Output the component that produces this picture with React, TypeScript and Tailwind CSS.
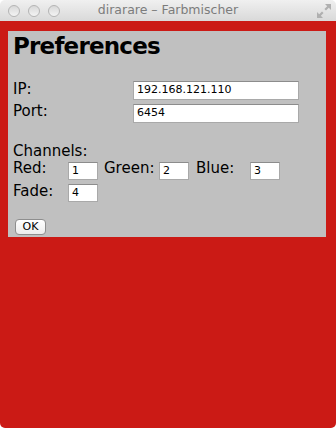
import React from "react";

const labelFont = { fontFamily: '"DejaVu Sans", "Liberation Sans", sans-serif' };

function Field({ value, className }: { value: string; className: string }) {
  return (
    <div
      className={`bg-white border border-[#a9a9a9] border-t-[#8c8c8c] pl-[3px] text-[11px] leading-[16px] text-black ${className}`}
    >
      {value}
    </div>
  );
}

function TrafficLight() {
  return (
    <div className="w-[12px] h-[12px] rounded-full border border-[#b4b4b4] bg-gradient-to-b from-[#d8d8d8] to-[#f4f4f4]" />
  );
}

export default function App() {
  return (
    <div
      className="w-[336px] h-[428px] flex flex-col rounded-[5px] overflow-hidden bg-white"
      style={labelFont}
    >
      {/* title bar */}
      <div className="relative h-[21px] shrink-0 flex items-center bg-gradient-to-b from-[#f0f0f0] to-[#d9d9d9]">
        <div className="flex gap-[8px] pl-[8px]">
          <TrafficLight />
          <TrafficLight />
          <TrafficLight />
        </div>
        <div className="absolute inset-0 flex items-center justify-center text-[12.5px] text-[#7c7c7c]">
          dirarare – Farbmischer
        </div>
        <svg
          className="absolute right-[5px] top-[4px]"
          width="14"
          height="14"
          viewBox="0 0 14 14"
          fill="#b0b0b0"
        >
          <path d="M8 0h6v6l-2.2-2.2-2.8 2.8-1.6-1.6 2.8-2.8z" />
          <path d="M6 14H0V8l2.2 2.2 2.8-2.8 1.6 1.6-2.8 2.8z" />
        </svg>
      </div>

      {/* content */}
      <div className="flex-1 bg-[#cb1a15] pt-[10px] pl-[8px]">
        <div className="w-[318px] h-[206px] bg-[#c0c0c0] px-[5px] pt-[1px] text-[15px] text-black">
          <h1 className="h-[28px] leading-[28px] text-[23px] font-bold tracking-[-0.8px]">
            Preferences
          </h1>

          <div className="mt-[20px] flex items-start h-[21px]">
            <span className="w-[120px] leading-[18px]">IP:</span>
            <Field value="192.168.121.110" className="mt-[1px] h-[19px] w-[166px]" />
          </div>
          <div className="mt-[1px] flex items-start h-[21px]">
            <span className="w-[120px] leading-[18px]">Port:</span>
            <Field value="6454" className="mt-[2px] h-[19px] w-[166px]" />
          </div>

          <div className="mt-[19px] leading-[18px] h-[18px]">Channels:</div>
          <div className="flex items-start h-[20px]">
            <span className="w-[55px] leading-[17px]">Red:</span>
            <Field value="1" className="mt-[2px] h-[18px] w-[30px]" />
            <span className="ml-[6px] w-[55px] leading-[17px]">Green:</span>
            <Field value="2" className="mt-[2px] h-[18px] w-[30px]" />
            <span className="ml-[7px] w-[54px] leading-[17px]">Blue:</span>
            <Field value="3" className="mt-[2px] h-[18px] w-[30px]" />
          </div>
          <div className="mt-[3px] flex items-start h-[19px]">
            <span className="w-[55px] leading-[17px]">Fade:</span>
            <Field value="4" className="mt-[1px] h-[18px] w-[30px]" />
          </div>

          <button className="mt-[17px] ml-[2px] w-[31px] h-[16px] rounded-[4px] border border-[#8e8e8e] bg-gradient-to-b from-white to-[#ececec] text-[11px] leading-[14px] text-black flex items-center justify-center">
            OK
          </button>
        </div>
      </div>
    </div>
  );
}
